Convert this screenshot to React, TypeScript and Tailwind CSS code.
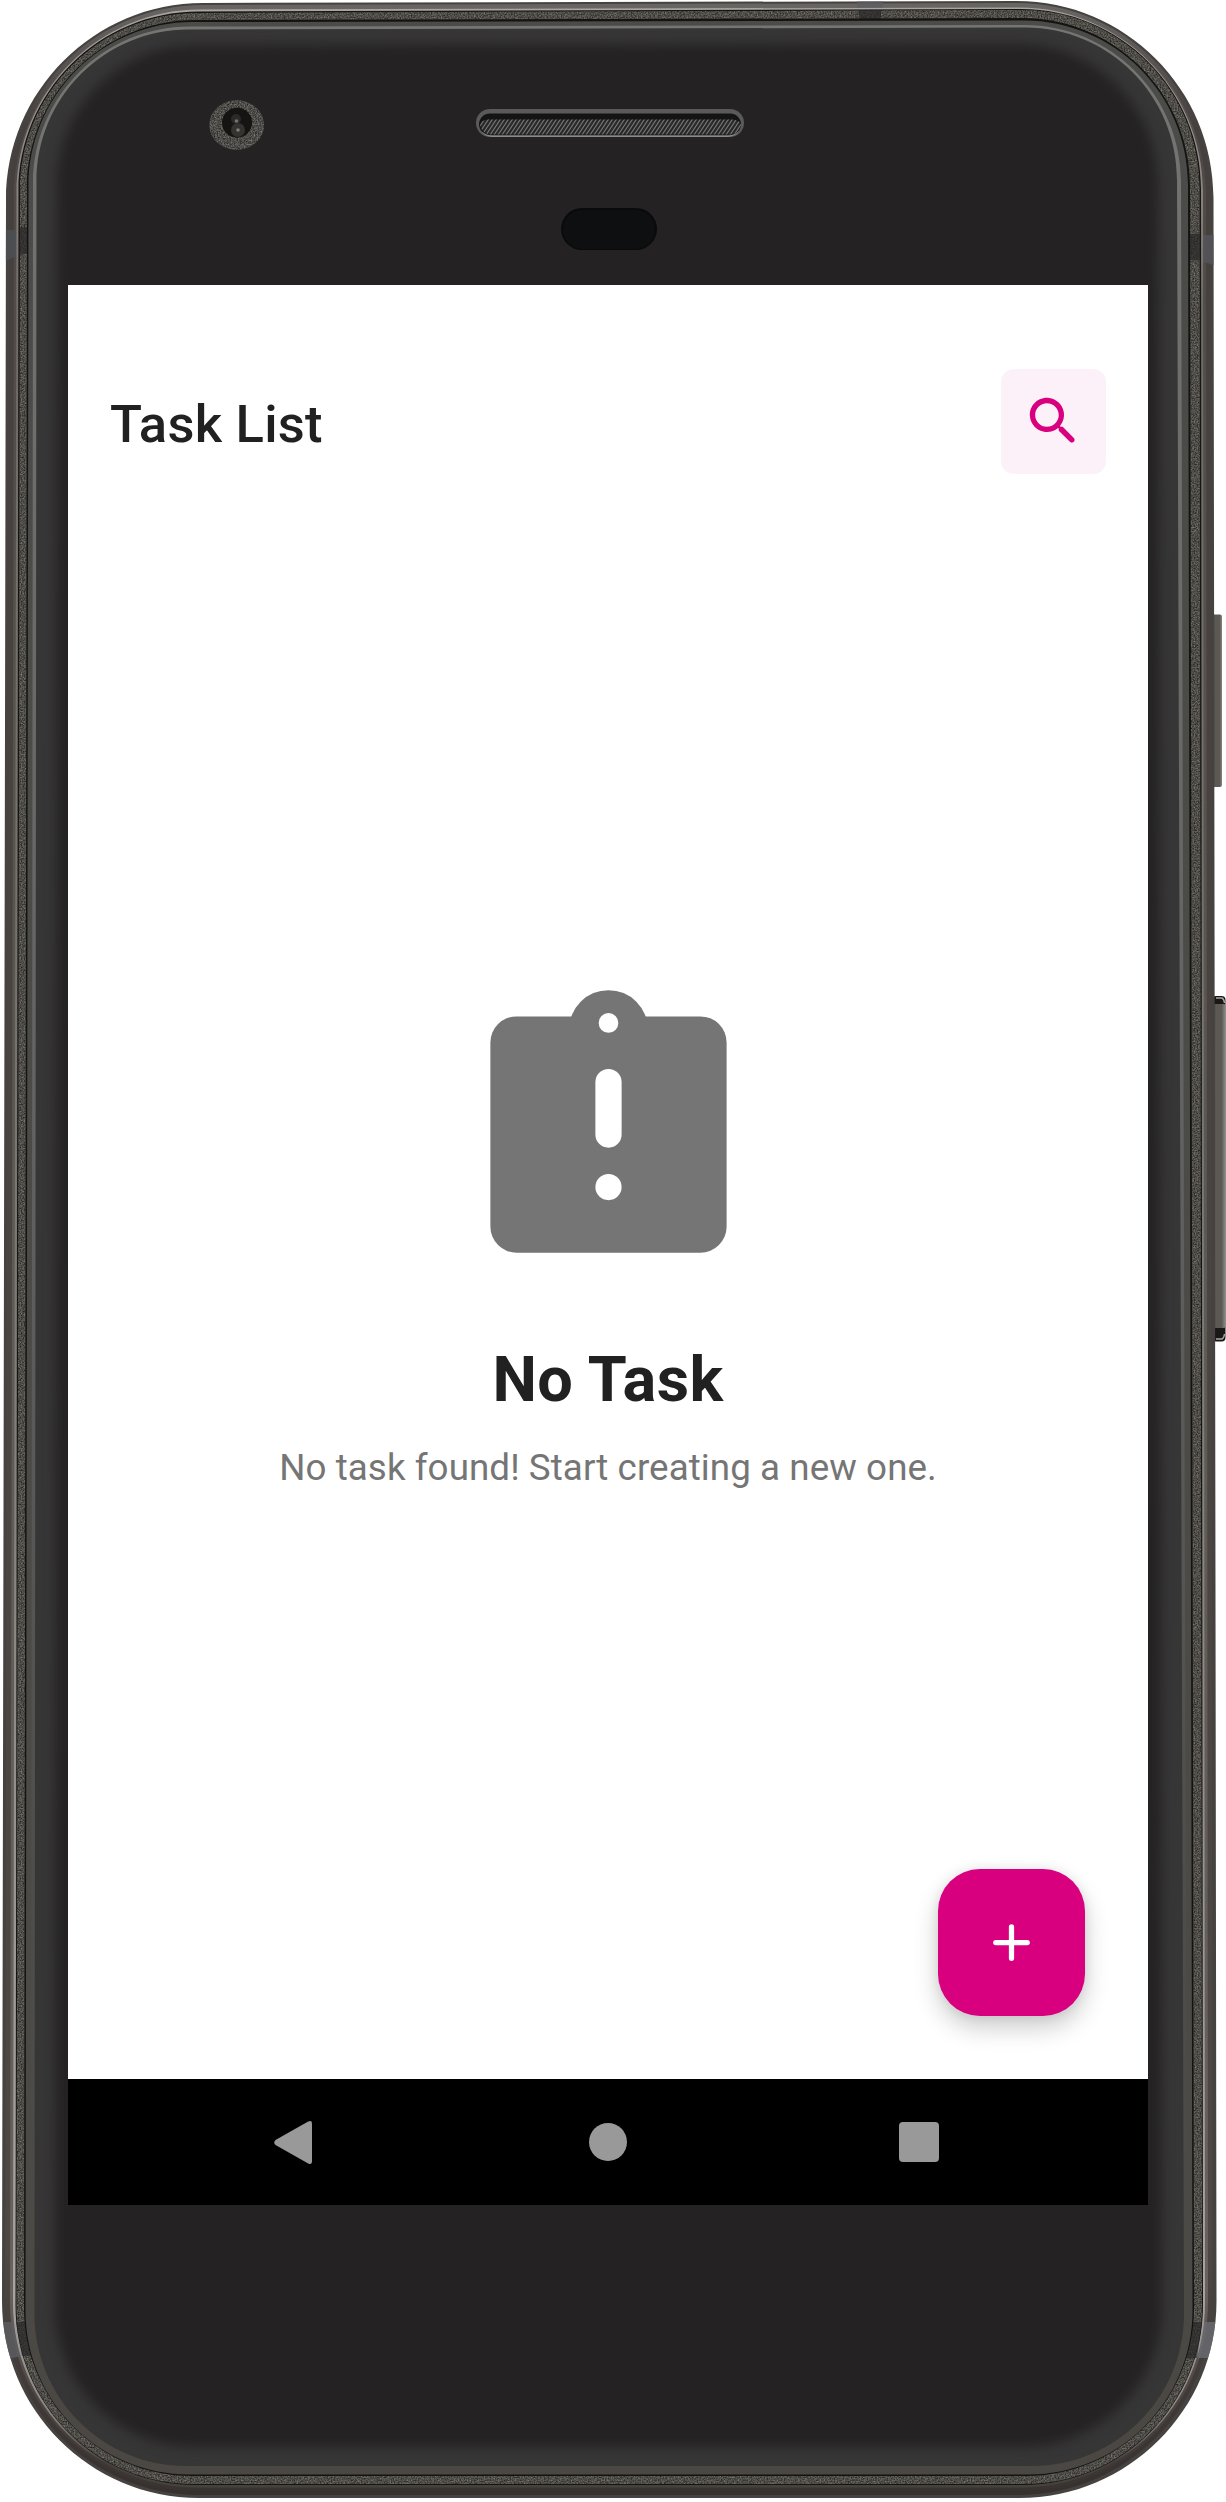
import React from "react";

type Ring = {
  lt: number;
  lb: number;
  rt: number;
  rb: number;
  tl: number;
  tr: number;
  b: number;
  r: number;
};

/** Closed outline of one layer of the phone body; sides may lean slightly. */
function outline({ lt, lb, rt, rb, tl, tr, b, r }: Ring): string {
  const k = r * 0.448;
  return [
    `M${lt + r} ${tl}`,
    `L${rt - r} ${tr}`,
    `C${rt - k} ${tr} ${rt} ${tr + k} ${rt} ${tr + r}`,
    `L${rb} ${b - r}`,
    `C${rb} ${b - k} ${rb - k} ${b} ${rb - r} ${b}`,
    `L${lb + r} ${b}`,
    `C${lb + k} ${b} ${lb} ${b - k} ${lb} ${b - r}`,
    `L${lt} ${tl + r}`,
    `C${lt} ${tl + k} ${lt + k} ${tl} ${lt + r} ${tl}Z`,
  ].join("");
}

const outer = outline({ lt: 6, lb: 2, rt: 1213.5, rb: 1216.5, tl: 3, tr: 1, b: 2498, r: 197 });
const metal = outline({ lt: 9, lb: 5, rt: 1210.5, rb: 1212.5, tl: 5, tr: 3, b: 2495, r: 194 });
const metalIn = outline({ lt: 14, lb: 10, rt: 1206, rb: 1208, tl: 8, tr: 6, b: 2491, r: 189 });
const shine = outline({ lt: 16.5, lb: 13, rt: 1203, rb: 1205, tl: 9.5, tr: 7.5, b: 2487.5, r: 184 });
const seam = outline({ lt: 18.5, lb: 15.5, rt: 1201, rb: 1203, tl: 11.5, tr: 9, b: 2485, r: 180 });
const grain = outline({ lt: 20, lb: 16.5, rt: 1199.5, rb: 1202, tl: 13, tr: 10, b: 2484, r: 178 });
const seamIn = outline({ lt: 27, lb: 24, rt: 1190, rb: 1194, tl: 20, tr: 18, b: 2476, r: 168 });
const lip = outline({ lt: 28.5, lb: 25.5, rt: 1188, rb: 1192.5, tl: 22, tr: 20.5, b: 2474.5, r: 164 });
const lipShine = outline({ lt: 33, lb: 31, rt: 1181, rb: 1187, tl: 26.5, tr: 25, b: 2469, r: 157 });
const glass = outline({ lt: 36.5, lb: 34.5, rt: 1177, rb: 1184, tl: 29.5, tr: 27.5, b: 2466, r: 152 });
const face = outline({ lt: 57, lb: 55, rt: 1158, rb: 1162, tl: 45, tr: 44, b: 2447, r: 140 });

function DeviceBody() {
  return (
    <svg className="absolute inset-0" width="1226" height="2502" viewBox="0 0 1226 2502" aria-hidden="true">
      <defs>
        <linearGradient id="shine" x1="0" y1="0" x2="0" y2="1">
          <stop offset="0" stopColor="#a9a5a1" />
          <stop offset="0.06" stopColor="#8f8a86" />
          <stop offset="0.12" stopColor="#6f6b67" />
          <stop offset="0.5" stopColor="#7a7872" />
          <stop offset="0.92" stopColor="#aaa5a1" />
          <stop offset="0.97" stopColor="#8a8580" />
          <stop offset="0.99" stopColor="#45413d" />
        </linearGradient>
        <linearGradient id="metalIn" x1="0" y1="0" x2="0" y2="1">
          <stop offset="0" stopColor="#6a6663" />
          <stop offset="0.06" stopColor="#4f4a47" />
          <stop offset="0.5" stopColor="#5c5a55" />
          <stop offset="0.92" stopColor="#67625e" />
          <stop offset="0.97" stopColor="#47423f" />
          <stop offset="1" stopColor="#383330" />
        </linearGradient>
        <linearGradient id="metal" x1="0" y1="0" x2="0" y2="1">
          <stop offset="0" stopColor="#696562" />
          <stop offset="0.05" stopColor="#45403d" />
          <stop offset="0.9" stopColor="#4e4845" />
          <stop offset="1" stopColor="#36302e" />
        </linearGradient>
        <linearGradient id="lip" x1="0" y1="0" x2="0" y2="1">
          <stop offset="0" stopColor="#4b4b49" />
          <stop offset="0.9" stopColor="#4b4a46" />
          <stop offset="1" stopColor="#4b4743" />
        </linearGradient>
        <linearGradient id="lipShine" x1="0" y1="0" x2="0" y2="1">
          <stop offset="0" stopColor="#757572" />
          <stop offset="0.45" stopColor="#626262" />
          <stop offset="0.75" stopColor="#4e4e4a" />
          <stop offset="1" stopColor="#4b4743" />
        </linearGradient>
        <pattern id="mesh" width="4" height="6" patternUnits="userSpaceOnUse">
          <path d="M-1 7.5L5 -1.5M-5 7.5L1 -1.5M3 7.5L9 -1.5" stroke="#77767a" strokeWidth="1.1" />
        </pattern>
        <filter id="soft" x="-5%" y="-5%" width="110%" height="110%" colorInterpolationFilters="sRGB">
          <feGaussianBlur stdDeviation="6" />
        </filter>
        <filter id="noise" x="0" y="0" width="100%" height="100%" colorInterpolationFilters="sRGB">
          <feTurbulence type="fractalNoise" baseFrequency="0.7" numOctaves="2" seed="4" />
          <feColorMatrix values="0.9 0 0 0 -0.14 0.9 0 0 0 -0.15 0.9 0 0 0 -0.17 0 0 0 0 1" />
          <feComposite in2="SourceGraphic" operator="in" />
        </filter>
        <linearGradient id="key" x1="0" y1="0" x2="1" y2="0">
          <stop offset="0" stopColor="#3b3835" />
          <stop offset="0.3" stopColor="#5c5954" />
          <stop offset="0.75" stopColor="#5c5954" />
          <stop offset="1" stopColor="#8a8782" />
        </linearGradient>
        <clipPath id="bodyClip">
          <path d={outer} />
        </clipPath>
      </defs>

      <rect x="1212" y="614.5" width="10" height="172.5" rx="2" fill="url(#key)" />
      <rect x="1212" y="996" width="13.5" height="345.5" rx="4" fill="#1a1817" />
      <rect x="1212" y="1004" width="13" height="324" rx="1" fill="url(#key)" />
      <path d="M1216 998h6q2 1 2.5 5M1216 1339h6q2-1 2.5-5" fill="none" stroke="#aaa8a4" strokeWidth="1.4" />

      <path d={outer} fill="#46423f" />
      <path d={metal} fill="url(#metal)" />
      <path d={metalIn} fill="url(#metalIn)" />
      <g clipPath="url(#bodyClip)">
        <path d="M0 230h18v26l-18 7z" fill="#4c5055" opacity="0.8" />
        <path d="M1201 235h18v32l-18-6z" fill="#55555b" opacity="0.8" />
        <path d="M0 2322h17l6 34-23 4z" fill="#5d5e62" opacity="0.8" />
        <path d="M1201 2322h18v36h-22z" fill="#6b6b73" opacity="0.8" />
        <path d="M857 0h26v20h-26z" fill="#5d5d62" opacity="0.75" />
      </g>
      <path d={shine} fill="url(#shine)" />
      <path d={seam} fill="#171514" />
      <path d={grain} fill="#504e49" />
      <path d={`${grain}${seamIn}`} fillRule="evenodd" fill="#fff" filter="url(#noise)" opacity="0.55" />
      <g fill="#262527" opacity="0.65">
        <path d="M20 227h8v27h-8z" />
        <path d="M1189 234h11v26h-11z" />
        <path d="M16 2322h12l6 34h-12z" />
        <path d="M1188 2322h14l-5 36h-14z" />
        <path d="M859 10h22v9h-22z" />
      </g>

      <path d={seamIn} fill="#141312" />
      <path d={lip} fill="url(#lip)" />
      <path d={lipShine} fill="url(#lipShine)" />
      <path d={glass} fill="#373636" />
      <path d={face} fill="#242223" filter="url(#soft)" />

      <ellipse cx="236.7" cy="125" rx="27.3" ry="24.7" fill="#504f4f" />
      <ellipse cx="236.7" cy="125" rx="27.3" ry="24.7" fill="#fff" filter="url(#noise)" opacity="0.6" />
      <circle cx="237" cy="122.7" r="15" fill="#151413" />
      <circle cx="238" cy="130" r="7" fill="#343331" />
      <circle cx="236" cy="119" r="5" fill="#2b2a28" />
      <circle cx="236.5" cy="121" r="1.8" fill="#77736e" />
      <circle cx="238" cy="130" r="1.8" fill="#807c76" />

      <rect x="476" y="109" width="268" height="28" rx="14" fill="#5b5a5b" />
      <path d="M482 131q4 5 10 5.300h236q6-.3 10-5.300" fill="none" stroke="#8b8a8b" strokeWidth="1.3" />
      <rect x="479" y="113.500" width="262" height="21.500" rx="10.700" fill="#151414" />
      <path d="M480 125q1-5 8-5.500h244q8 .5 9 5.500q-2 9-11 9.500h-239q-9-.5-11-9.500z" fill="#292829" />
      <path d="M480 125q1-5 8-5.500h244q8 .5 9 5.500q-2 9-11 9.500h-239q-9-.5-11-9.500z" fill="url(#mesh)" />

      <rect x="561" y="208" width="96" height="42" rx="21" fill="#0a0a0b" />
      <rect x="563" y="210" width="92" height="39" rx="19.500" fill="#0e0f10" />
    </svg>
  );
}

function SearchIcon() {
  return (
    <svg className="size-[63px]" viewBox="0 0 24 24" fill="#d8007f" aria-hidden="true">
      <path d="M15.500 14h-.79l-.28-.27c1.200-1.400 1.820-3.310 1.480-5.340-.47-2.780-2.790-5-5.590-5.340-4.230-.52-7.790 3.040-7.270 7.270.34 2.800 2.560 5.120 5.340 5.590 2.030.34 3.940-.28 5.340-1.480l.27.28v.79l4.250 4.250c.41.41 1.080.41 1.490 0 .41-.41.41-1.080 0-1.490L15.500 14zm-6 0C7.010 14 5 11.990 5 9.500S7.010 5 9.500 5 14 7.010 14 9.500 11.990 14 9.500 14z" />
    </svg>
  );
}

function TaskAlertIcon() {
  return (
    <svg className="size-[315px]" viewBox="0 0 24 24" aria-hidden="true">
      <g fill="#757575">
        <rect x="3" y="3" width="18" height="18" rx="2" />
        <circle cx="12" cy="4" r="3" />
      </g>
      <g fill="#fff">
        <circle cx="12" cy="3.500" r="0.750" />
        <rect x="11" y="7" width="2" height="6" rx="1" />
        <circle cx="12" cy="16" r="1" />
      </g>
    </svg>
  );
}

function NavigationBar() {
  return (
    <nav className="flex h-[126px] items-center bg-black pl-[206px] text-[#999999]">
      <svg className="h-[43px] w-[38px]" viewBox="0 0 38 43" fill="currentColor" aria-label="Back">
        <path d="M34.200.6Q38-1.200 38 2.500V40.500Q38 44.200 34.200 42.400L1.500 24Q-1 21.500 1.500 19Z" />
      </svg>
      <span className="ml-[277px] size-[38px] rounded-full bg-current" />
      <span className="ml-[272px] size-10 rounded-[4px] bg-current" />
    </nav>
  );
}

export default function App() {
  return (
    <div className="relative h-[2502px] w-[1226px] overflow-hidden bg-white pt-[285px] pl-[68px] font-['Roboto',sans-serif]">
      <DeviceBody />
      <div className="relative flex h-[1920px] w-[1080px] flex-col bg-white">
        <header className="flex items-center justify-between px-[42px] pt-[84px]">
          <h1 className="pt-[6px] text-[52.5px] leading-[63px] font-medium tracking-[0.25px] text-[#212121]">Task List</h1>
          <button className="grid size-[105px] place-items-center rounded-[13px] bg-[#fcf0f9]" aria-label="Search">
            <SearchIcon />
          </button>
        </header>
        <main className="flex flex-1 flex-col items-center pt-[503px]">
          <TaskAlertIcon />
          <h2 className="mt-[51px] text-[63px] leading-[74px] font-bold tracking-[0.4px] text-[#212121]">No Task</h2>
          <p className="mt-[29px] text-[36.750px] leading-[44px] tracking-[0.07px] text-[#757575]">
            No task found! Start creating a new one.
          </p>
        </main>
        <button
          className="absolute right-[63px] bottom-[189px] grid size-[147px] place-items-center rounded-[42px] bg-[#d8007f] shadow-[0_12px_24px_rgba(0,0,0,0.2),0_0px_12px_rgba(0,0,0,0.08)]"
          aria-label="Add task"
        >
          <svg className="size-[63px]" viewBox="0 0 24 24" stroke="#fff" strokeWidth="2" strokeLinecap="round" aria-hidden="true">
            <path d="M12 6v12M6 12h12" />
          </svg>
        </button>
        <NavigationBar />
      </div>
    </div>
  );
}
